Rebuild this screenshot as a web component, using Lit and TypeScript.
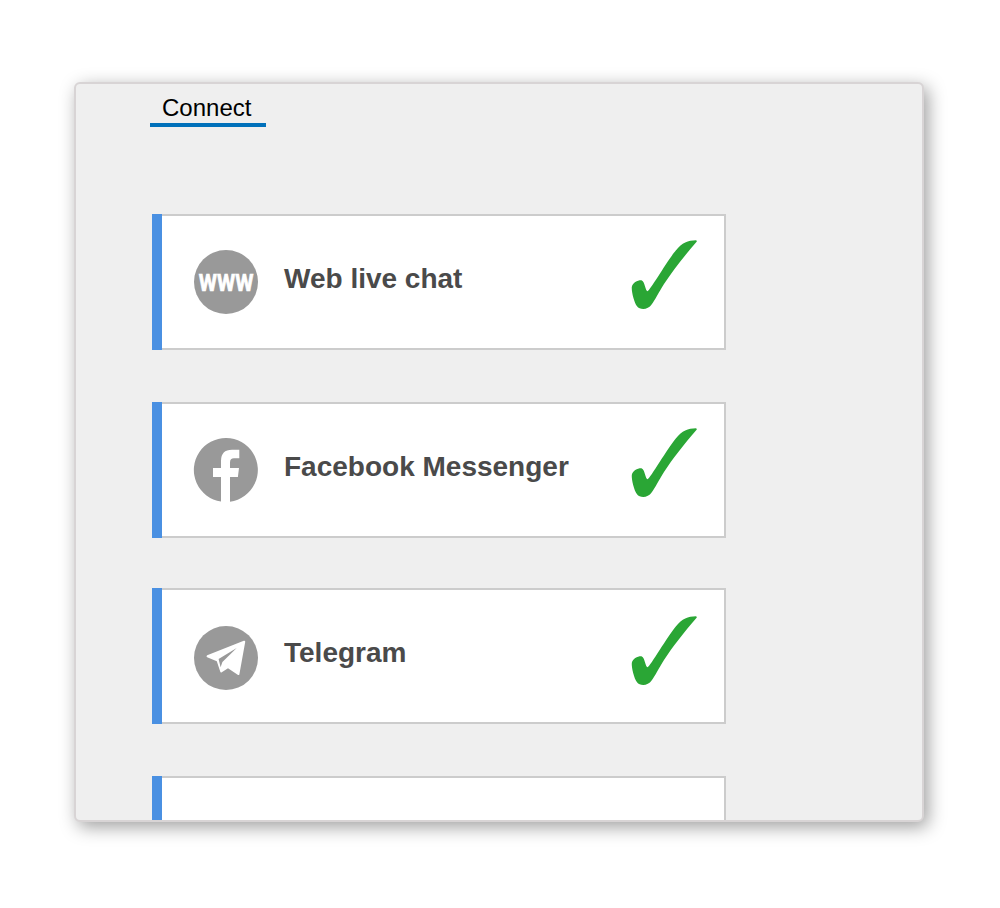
import { LitElement, html, css, svg } from 'lit';
import { customElement, property } from 'lit/decorators.js';
import { classMap } from 'lit/directives/class-map.js';

const icons = {
  web: svg`
    <circle cx="32" cy="32" r="32" fill="#999" />
    <text class="www" x="4.8" y="40.7" textLength="54.6" lengthAdjust="spacingAndGlyphs">WWW</text>
  `,
  facebook: svg`
    <path fill="#999" d="M27 63.6A32 32 0 1 1 36 63.7V39H43.9L45 30H36V24.5Q36 20.3 40 20.3H45.3V11.8H38Q27 11.8 27 23V30H19V39H27Z" />
  `,
  telegram: svg`
    <circle cx="32" cy="32" r="32" fill="#999" />
    <path fill="#fff" d="M13.2 29.2L49.8 14.8Q51.4 14.4 51.2 16L45.4 48.2Q45 49.6 43.7 48.7L34 42.2L27.8 46.2Q26.6 47 26.2 45.6L22.8 35.2L13.2 31.3Q11.6 30.3 13.2 29.2Z" />
    <path fill="#999" d="M42.7 22.1L24.6 33L26.6 41.2L28.4 36Z" />
  `,
};

const channels = [
  { icon: 'web', name: 'Web live chat' },
  { icon: 'facebook', name: 'Facebook Messenger' },
  { icon: 'telegram', name: 'Telegram' },
  { icon: '', name: '' },
];

@customElement('channel-card')
class ChannelCard extends LitElement {
  @property() icon = '';
  @property() name = '';

  static styles = css`
    :host {
      display: block;
    }

    .wrap {
      display: flex;
      width: 574px;
    }

    .bar {
      flex: none;
      width: 10px;
      height: 136px;
      background: #4a90e2;
    }

    .card {
      box-sizing: border-box;
      display: flex;
      flex: 1;
      align-items: flex-start;
      height: 136px;
      padding: 0 26px 0 32px;
      background: white;
      border: 2px solid #ccc;
      border-left: 0;
    }

    .icon {
      flex: none;
      width: 64px;
      height: 64px;
      margin-top: 34px;
      overflow: visible;
    }

    .low .icon {
      margin-top: 36px;
    }

    .www {
      font: bold 24.5px Roboto, sans-serif;
      fill: white;
      stroke: white;
      stroke-width: 0.7px;
    }

    .name {
      flex: 1;
      margin: 47px 0 0 26px;
      font: bold 28px/32px "Liberation Sans", Arial, sans-serif;
      white-space: nowrap;
      color: #4a4a4a;
    }

    .check {
      flex: none;
      width: 68px;
      height: 72px;
      margin-top: 23px;
    }

    .low .check {
      margin-top: 25px;
    }
  `;

  render() {
    return html`
      <div class="wrap">
        <div class="bar"></div>
        <div class=${classMap({ card: true, low: this.icon === 'telegram' })}>
          ${this.icon
            ? html`
                <svg class="icon" viewBox="0 0 64 64">${icons[this.icon]}</svg>
                <div class="name">${this.name}</div>
                <svg class="check" viewBox="0 0 68 72">
                  <path fill="#2aa635" d="M1.8 48C2.6 43.8 8 41 11.8 41.4C14.8 42.2 15.4 52.2 17.6 52.2C20 51.6 38 20.5 46 11.2C52 3.6 58 1.4 66 1.2Q67.4 1.7 66.6 2.8C53 18.5 43 31.5 34 45C29 53 25 61 21.6 65.6C18 71.2 9.8 71.2 7 67.3C4.2 63.5 1.4 53 1.8 48Z" />
                </svg>
              `
            : ''}
        </div>
      </div>
    `;
  }
}

@customElement('app-root')
class AppRoot extends LitElement {
  static styles = css`
    :host {
      display: block;
      box-sizing: border-box;
      height: 908px;
      padding: 82px 76px 0 74px;
      background: white;
      font-family: "Liberation Sans", Arial, sans-serif;
    }

    .panel {
      box-sizing: border-box;
      height: 740px;
      padding: 9px 0 0 74px;
      overflow: hidden;
      background: #efefef;
      border: 2px solid #d8d4d5;
      border-radius: 6px;
      box-shadow: 4px 5px 18px rgba(0, 0, 0, 0.38);
    }

    .tab {
      box-sizing: border-box;
      width: 116px;
      height: 34px;
      padding-left: 12px;
      border-bottom: 4px solid #0070ba;
      font-size: 24px;
      line-height: 30px;
      color: black;
    }

    .list {
      display: grid;
      grid-template-rows: 188px 186px 188px 136px;
      padding: 87px 0 0 2px;
    }
  `;

  render() {
    return html`
      <div class="panel">
        <div class="tab">Connect</div>
        <div class="list">
          ${channels.map((c) => html`<channel-card .icon=${c.icon} .name=${c.name}></channel-card>`)}
        </div>
      </div>
    `;
  }
}
